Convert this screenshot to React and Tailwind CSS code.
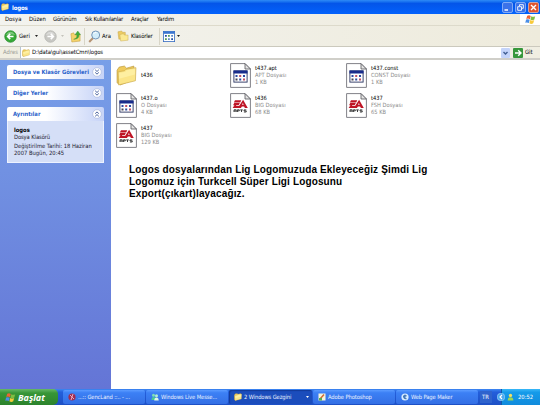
import React from 'react';

const Folder = ({ className }) => (
  <svg viewBox="0 0 20 20" className={className}>
    <path d="M1 5 L3 2 L8 1 L10 3 L17 1 L17 14 L4 19 L1 17Z" fill="#f0cb5c" stroke="#b8963c" strokeWidth=".6" />
    <path d="M2 6.5 L8 5.5 L9.5 4 L19 2.5 L18.5 15 L2.5 19Z" fill="#fbe588" stroke="#c9a748" strokeWidth=".6" />
    <path d="M3 7.5 L9 6.5 L10 5 L18 3.8 L18 9 L3 13Z" fill="#fff3ad" opacity=".7" />
  </svg>
);

const Page = ({ children }) => (
  <svg viewBox="0 0 21 25" className="w-[21px] h-[25px] shrink-0">
    <path d="M.6 .6 H15 L20.4 6 V24.4 H.6Z" fill="#fff" stroke="#73737b" strokeWidth=".9" />
    <path d="M15 .6 V6 H20.4Z" fill="#e4e4e4" stroke="#55555c" strokeWidth=".8" />
    {children}
  </svg>
);

const WindowFile = () => (
  <Page>
    <rect x="3.9" y="7.9" width="13.2" height="11.2" fill="#fff" stroke="#26305e" strokeWidth=".9" />
    <rect x="3.5" y="7.5" width="14" height="3" fill="#182c8c" />
    <path d="M5.5 12h2v2h-2zM13 12h2v2h-2zM9.2 15.5h2v2h-2z" fill="#2b4aa4" />
    <path d="M9.2 12h2v2h-2zM13 15.5h2v2h-2z" fill="#c35163" />
    <path d="M5.5 15.5h2v2h-2z" fill="#444450" />
  </Page>
);

const EaFile = () => (
  <Page>
    <path d="M5 7.3H11.3L10.2 9.5H3.8ZM4.2 10.1H9.8L8.7 12.2H6.4L5.9 13H9.1L13.1 6.8L17.8 15H14.9L14.1 13.4H11.9L10.9 15H2.6L4.5 12.2H3.1ZM12.9 10L12 11.7H13.7Z" fill="#bf1526" fillRule="evenodd" />
    <path d="M4 19v-2.2h2.2v2.2M4 18h2M7.4 19v-2.2h1.9v1.1H7.4M10.2 16.9h2.6M11.5 16.9v2.1M16.3 16.9h-2.3v1h2.2v1.1h-2.3" stroke="#2c2c2c" strokeWidth=".9" fill="none" />
  </Page>
);

const File = ({ icon, name, type, size }) => (
  <div className="flex h-[30px] items-center">
    <div className="flex w-[25px] shrink-0">{icon}</div>
    <div className="text-[5.7px] leading-[7px] whitespace-nowrap text-[#8b8b8b]">
      <div className="text-black">{name}</div>
      {type && <div>{type}</div>}
      {size && <div>{size}</div>}
    </div>
  </div>
);

const Flag = ({ className }) => (
  <svg viewBox="0 0 20 20" className={className}>
    <path d="M4 3Q8 1 10.5 3.5L8.8 9.5Q6 7.5 2.3 9Z" fill="#ed6336" />
    <path d="M11.5 4Q15 6 18.5 4L17 10Q13 12 9.8 10Z" fill="#80bd42" />
    <path d="M2 10Q5.5 8.5 8.5 10.5L7 16.5Q4 14.5 .5 16Z" fill="#4a8ee8" />
    <path d="M9.5 11Q13 13 16.7 11L15 17Q11.5 19 8 17Z" fill="#f8ca39" />
  </svg>
);

const Chevron = ({ up }) => (
  <svg viewBox="0 0 12 12" className="h-[10px] w-[10px] shrink-0">
    <circle cx="6" cy="6" r="5.2" fill="#fff" stroke="#aab8dc" strokeWidth=".8" />
    <path d={up ? 'M3.8 5.6L6 3.5L8.2 5.6M3.8 8.8L6 6.7L8.2 8.8' : 'M3.8 3.3L6 5.4L8.2 3.3M3.8 6.5L6 8.6L8.2 6.5'} stroke="#3a5595" strokeWidth="1.1" fill="none" />
  </svg>
);

const PanelHead = ({ title, up }) => (
  <div className="flex h-[14px] w-[97px] items-center justify-between rounded-t-[2px] bg-linear-to-r from-white from-40% to-[#c6d3f7] pr-[2px] pl-[6px]">
    <span className="text-[5.8px] font-bold whitespace-nowrap text-[#2a5fca]">{title}</span>
    <Chevron up={up} />
  </div>
);

const Down = () => (
  <svg viewBox="0 0 6 4" className="h-[2px] w-[3px] shrink-0"><path d="M0 0H6L3 4Z" fill="#222" /></svg>
);

const Round = ({ gray, className }) => (
  <svg viewBox="0 0 14 14" className={className}>
    <circle cx="7" cy="7" r="6.2" fill={gray ? '#c7c7c3' : '#36a936'} stroke={gray ? '#b4b4b0' : '#268a2c'} strokeWidth=".8" />
    <path d="M2.2 5.5Q3.5 2 7 1.8Q10.5 2 11.8 5.5Q7 3.5 2.2 5.5" fill="#fff" opacity=".35" />
    <path d={gray ? 'M3.7 7H10M7.3 4.2L10.1 7L7.3 9.8' : 'M10.3 7H4M6.7 4.2L3.9 7L6.7 9.8'} stroke="#fff" strokeWidth="1.7" fill="none" />
  </svg>
);

const Task = ({ icon, label, active, width, arrow }) => (
  <div className={`${width} flex h-[14px] shrink-0 items-center rounded-[2px] pl-[5px] ${active ? 'bg-[#1b4dbc] shadow-[inset_1px_1px_1px_#123a98]' : 'bg-linear-to-b from-[#5b9bff] via-[#3c80f5] via-20% to-[#346fe4]'}`}>
    <div className="flex w-[10px] shrink-0">{icon}</div>
    <span className="text-[5.8px] tracking-[-0.12px] whitespace-nowrap text-[#e8f1ff]">{label}</span>
    {arrow && <svg viewBox="0 0 6 4" className="mr-[3px] ml-auto h-[2px] w-[3px]"><path d="M0 0H6L3 4Z" fill="#fff" /></svg>}
  </div>
);

export default function App() {
  return (
    <div className="flex h-[405px] w-[540px] flex-col overflow-hidden bg-white text-[5.8px] leading-[7px] text-black [font-family:'DejaVu_Sans_Condensed','DejaVu_Sans',sans-serif]">
      <header className="flex h-[14px] shrink-0 items-center bg-linear-to-b from-[#2f8bf6] via-[#0455e9] via-25% to-[#0362fc] pr-[1px] pl-[1px]">
        <Folder className="h-[8px] w-[8px]" />
        <span className="ml-[3px] text-[6px] font-bold tracking-[-0.15px] text-white">logos</span>
        <div className="ml-auto flex gap-[2px]">
          <svg viewBox="0 0 11 11" className="h-[11px] w-[11px]"><rect x=".5" y=".5" width="10" height="10" rx="1.5" fill="#3b72e9" stroke="#a9c7fa" strokeWidth=".7" /><path d="M2.5 8H6" stroke="#fff" strokeWidth="1.5" /></svg>
          <svg viewBox="0 0 11 11" className="h-[11px] w-[11px]"><rect x=".5" y=".5" width="10" height="10" rx="1.5" fill="#3b72e9" stroke="#a9c7fa" strokeWidth=".7" /><path d="M4.5 4V2.7H8.3V6.3H7M2.7 4.7H6.5V8.3H2.7Z" stroke="#fff" strokeWidth=".9" fill="none" /></svg>
          <svg viewBox="0 0 11 11" className="h-[11px] w-[11px]"><rect x=".5" y=".5" width="10" height="10" rx="1.5" fill="#e1552f" stroke="#f5c1ae" strokeWidth=".7" /><path d="M3 3L8 8M8 3L3 8" stroke="#fff" strokeWidth="1.4" /></svg>
        </div>
      </header>

      <nav className="flex h-[12px] shrink-0 items-center border-b border-[#dddacb] bg-linear-to-r from-[#f3f3ef] to-[#eeebdc] pl-[5px] text-[5.9px] whitespace-nowrap">
        <span className="w-[24px]">Dosya</span>
        <span className="w-[24px]">Düzen</span>
        <span className="w-[32px] tracking-[-0.2px]">Görünüm</span>
        <span className="w-[46px] tracking-[-0.25px]">Sık Kullanılanlar</span>
        <span className="w-[26px] tracking-[-0.2px]">Araçlar</span>
        <span className="tracking-[-0.1px]">Yardım</span>
        <div className="ml-auto flex h-[11px] w-[20px] items-center justify-center bg-white"><Flag className="h-[11px] w-[11px]" /></div>
      </nav>

      <div className="flex h-[21px] shrink-0 items-center border-b border-[#cbc9bd] bg-linear-to-r from-[#f3f3ef] to-[#eeebdc] pl-[4px] text-[5.9px]">
        <Round className="h-[13px] w-[13px]" />
        <span className="ml-[2px] w-[16px]">Geri</span>
        <Down />
        <Round gray className="ml-[6px] h-[13px] w-[13px]" />
        <svg viewBox="0 0 6 4" className="ml-[4px] h-[2px] w-[3px]"><path d="M0 0H6L3 4Z" fill="#c4c3bb" /></svg>
        <svg viewBox="0 0 12 14" className="ml-[6px] h-[13px] w-[11px]">
          <path d="M1 4L4 3L5 5H11V12L2 13Z" fill="#f4d36b" stroke="#c79e3f" strokeWidth=".6" />
          <path d="M4 10Q8 9 7.5 5H5.5L8.5 1L11.5 5H9.8Q10 10 4 10Z" fill="#43ac38" stroke="#2a8429" strokeWidth=".4" />
        </svg>
        <div className="ml-[3px] h-[17px] w-px bg-[#d8d5c7]" />
        <svg viewBox="0 0 13 13" className="ml-[3px] h-[13px] w-[13px]">
          <path d="M5 8L1.2 12" stroke="#b69373" strokeWidth="2" />
          <circle cx="7.7" cy="5" r="4" fill="#d2edfb" stroke="#7596b8" />
          <path d="M5.5 4Q6.5 2 8.5 2.5" stroke="#fff" fill="none" />
        </svg>
        <span className="ml-[1px] w-[15px]">Ara</span>
        <svg viewBox="0 0 13 13" className="h-[12px] w-[12px]">
          <path d="M1 2L5 1L6 2.5H9V9L2 10Z" fill="#edcc61" stroke="#c3a149" strokeWidth=".5" />
          <path d="M3 5L7 4L8 5.5H12V11L4 12Z" fill="#fbe991" stroke="#c8aa56" strokeWidth=".5" />
        </svg>
        <span className="ml-[2px] w-[28px] whitespace-nowrap tracking-[-0.2px]">Klasörler</span>
        <div className="h-[17px] w-px bg-[#d8d5c7]" />
        <svg viewBox="0 0 12 11" className="ml-[3px] h-[11px] w-[12px]">
          <rect x=".4" y=".4" width="11.2" height="10.2" fill="#fff" stroke="#356bc1" strokeWidth=".8" />
          <path d="M.4 .4H11.6V2.8H.4Z" fill="#3a75d0" />
          <path d="M2 4h1.8v1.8H2zM8.2 7.2H10V9H8.2z" fill="#244d9d" /><path d="M5 4h1.8v1.8H5zM2 7.2h1.8V9H2z" fill="#519b54" /><path d="M8.2 4H10v1.8H8.2zM5 7.2h1.8V9H5z" fill="#5b89c8" />
        </svg>
        <div className="ml-[2px] flex"><Down /></div>
      </div>

      <div className="flex h-[13px] shrink-0 items-center border-b-2 border-[#d0cfc9] bg-[#f0eee2] pl-[3px] text-[5.9px]">
        <span className="w-[17px] text-[#9b9b95]">Adres</span>
        <div className="flex h-[11px] w-[490px] items-center border-l border-[#b5c4d4] bg-white">
          <Folder className="ml-[1px] h-[8px] w-[8px]" />
          <span className="ml-[2px] tracking-[-0.1px]">D:\data\gui\assetCmn\logos</span>
          <svg viewBox="0 0 9 10" className="ml-auto h-[10px] w-[9px]"><rect width="9" height="10" rx="1" fill="#c4d4fa" /><path d="M2.5 4L4.5 6L6.5 4" stroke="#405e92" strokeWidth="1.4" fill="none" /></svg>
        </div>
        <svg viewBox="0 0 10 10" className="ml-[3px] h-[10px] w-[10px]"><rect width="10" height="10" rx="1" fill="#36973b" /><path d="M2 5H8M5.2 2.2L8 5L5.2 7.8" stroke="#fff" strokeWidth="1.4" fill="none" /></svg>
        <span className="ml-[2px]">Git</span>
      </div>

      <div className="flex h-[329px] shrink-0">
        <aside className="flex w-[111px] shrink-0 flex-col gap-[7px] bg-linear-to-b from-[#789fe8] to-[#6475d6] pt-[5px] pl-[7px]">
          <PanelHead title="Dosya ve Klasör Görevleri" />
          <PanelHead title="Diğer Yerler" />
          <section>
            <PanelHead title="Ayrıntılar" up />
            <div className="h-[42px] w-[97px] border border-t-0 border-[#edf2ff] bg-[#d5dff7] pt-[6px] pl-[6px] whitespace-nowrap text-[#1c2030]">
              <div className="font-bold text-black">logos</div>
              <div className="tracking-[-0.1px]">Dosya Klasörü</div>
              <div className="mt-[2px] tracking-[-0.03px]">Değiştirilme Tarihi: 18 Haziran</div>
              <div>2007 Bugün, 20:45</div>
            </div>
          </section>
        </aside>
        <main className="flex flex-1 flex-col">
          <div className="grid grid-cols-[114px_116px_115px] pl-[5px]">
            <File icon={<Folder className="h-[21px] w-[21px]" />} name="t436" />
            <File icon={<WindowFile />} name="t437.apt" type="APT Dosyası" size="1 KB" />
            <File icon={<WindowFile />} name="t437.const" type="CONST Dosyası" size="1 KB" />
            <File icon={<WindowFile />} name="t437.o" type="O Dosyası" size="4 KB" />
            <File icon={<EaFile />} name="t436" type="BIG Dosyası" size="68 KB" />
            <File icon={<EaFile />} name="t437" type="FSH Dosyası" size="65 KB" />
            <File icon={<EaFile />} name="t437" type="BIG Dosyası" size="129 KB" />
          </div>
          <p className="mt-[14px] ml-[18px] text-[10px] leading-[12px] font-bold tracking-[0.14px] whitespace-nowrap [font-family:'Liberation_Sans',sans-serif]">
            Logos dosyalarından Lig Logomuzuda Ekleyeceğiz Şimdi Lig<br />
            Logomuz için Turkcell Süper Ligi Logosunu<br />
            Export(çıkart)layacağız.
          </p>
        </main>
      </div>

      <footer className="flex h-[16px] shrink-0 items-center bg-linear-to-b from-[#3e87f3] via-[#245edb] via-20% to-[#1d50c5]">
        <div className="flex h-[16px] w-[58px] shrink-0 items-center rounded-r-[5px] bg-linear-to-b from-[#67b967] via-[#379637] via-25% to-[#2c832c] pl-[5px]">
          <Flag className="h-[11px] w-[11px]" />
          <span className="ml-[2px] text-[9px] font-bold text-white italic [font-family:'Open_Sans',sans-serif]">Başlat</span>
        </div>
        <div className="ml-[5px] flex gap-[1px]">
          <Task width="w-[82px]" label="...:: GencLand ::.. - ..." icon={<svg viewBox="0 0 8 8" className="h-[8px] w-[8px]"><circle cx="4" cy="4" r="3.6" fill="#a22c50" /><path d="M2 2L6 6M5 1L3 7" stroke="#e6a7bf" /></svg>} />
          <Task width="w-[82px]" label="Windows Live Messe..." icon={<svg viewBox="0 0 8 8" className="h-[8px] w-[8px]"><circle cx="2.5" cy="2.2" r="1.5" fill="#7ee0b4" /><circle cx="5.5" cy="2.8" r="1.5" fill="#b5f2cd" /><path d="M.5 7Q.5 4 2.5 4Q5 4 5 7Z" fill="#49c996" /><path d="M3.2 7.5Q3.4 4.5 5.5 4.5Q7.6 4.5 7.7 7.5Z" fill="#dff9e8" /></svg>} />
          <Task active arrow width="w-[83px]" label="2 Windows Gezgini" icon={<Folder className="h-[8px] w-[8px]" />} />
          <Task width="w-[82px]" label="Adobe Photoshop" icon={<svg viewBox="0 0 8 8" className="h-[8px] w-[8px]"><rect x=".5" y=".5" width="7" height="7" fill="#f5f3dc" /><path d="M2 6L6 1.5" stroke="#d06b32" strokeWidth="1.5" /><path d="M1 5h3v2.5H1z" fill="#55ae56" /></svg>} />
          <Task width="w-[82px]" label="Web Page Maker" icon={<svg viewBox="0 0 8 8" className="h-[8px] w-[8px]"><circle cx="4" cy="4" r="3.6" fill="#d9edff" /><path d="M2 3Q4 0 6 3L4 4L6 6Q3 7 2 4Z" fill="#4779b8" /></svg>} />
        </div>
        <span className="ml-[2px] flex h-[12px] w-[12px] items-center bg-[#2f63cd] pl-[2px] text-[5.8px] text-white">TR</span>
        <div className="ml-auto flex h-[16px] w-[39px] items-center border-l border-[#115ca8] bg-linear-to-b from-[#39b8f8] via-[#159bea] via-20% to-[#108bdc] text-white">
          <svg viewBox="0 0 8 8" className="ml-[-5px] h-[8px] w-[8px] shrink-0"><circle cx="4" cy="4" r="3.8" fill="#4ba9ef" stroke="#bde2ff" strokeWidth=".5" /><path d="M5 2L3 4L5 6" stroke="#fff" strokeWidth="1.2" fill="none" /></svg>
          <svg viewBox="0 0 8 8" className="ml-[2px] h-[8px] w-[7px] shrink-0"><circle cx="4" cy="2.2" r="1.9" fill="#f3df65" /><path d="M.8 8Q.6 4.3 4 4.3Q7.4 4.3 7.2 8Z" fill="#99d657" /></svg>
          <span className="ml-[4px] text-[5.8px]">20:52</span>
        </div>
      </footer>
    </div>
  );
}
